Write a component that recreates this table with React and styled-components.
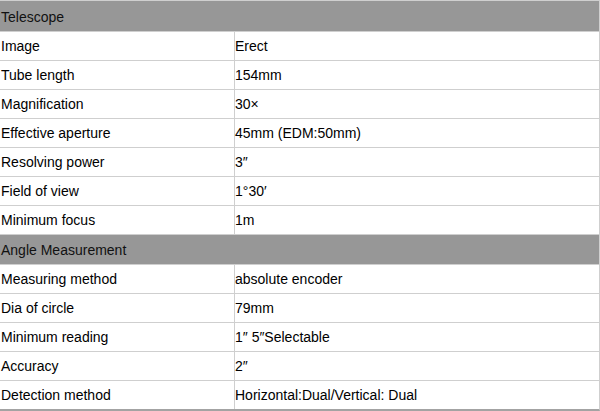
import React from 'react'
import styled, { createGlobalStyle } from 'styled-components'

const sections = [
    {
        title: 'Telescope',
        rows: [
            ['Image', 'Erect'],
            ['Tube length', '154mm'],
            ['Magnification', '30×'],
            ['Effective aperture', '45mm (EDM:50mm)'],
            ['Resolving power', '3″'],
            ['Field of view', '1°30′'],
            ['Minimum focus', '1m'],
        ],
    },
    {
        title: 'Angle Measurement',
        rows: [
            ['Measuring method', 'absolute encoder'],
            ['Dia of circle', '79mm'],
            ['Minimum reading', '1″ 5″Selectable'],
            ['Accuracy', '2″'],
            ['Detection method', 'Horizontal:Dual/Vertical: Dual'],
        ],
    },
]

function App() {
    return (
        <>
            <GlobalStyle />
            <Specs>
                {sections.map((section, i) => (
                    <React.Fragment key={section.title}>
                        <SectionHeader first={i === 0}>{section.title}</SectionHeader>
                        {section.rows.map(([label, value]) => (
                            <Row key={label}>
                                <Label>{label}</Label>
                                <Value>{value}</Value>
                            </Row>
                        ))}
                    </React.Fragment>
                ))}
            </Specs>
        </>
    )
}

export default App

const GlobalStyle = createGlobalStyle`
    body {
        margin: 0;
        background: #fff;
        font-family: "Liberation Sans", Arial, sans-serif;
        font-size: 14px;
        color: #000;
    }
`

const Specs = styled.div`
    width: 600px;
    box-sizing: border-box;
    border-top: 1px solid #cfcfcf;
    border-right: 1px solid #cfcfcf;
    border-bottom: 2px solid #a3a3a3;
`

const SectionHeader = styled.div`
    box-sizing: border-box;
    height: ${p => (p.first ? '31px' : '30px')};
    padding-top: ${p => (p.first ? '2px' : '1px')};
    display: flex;
    align-items: center;
    padding-left: 1px;
    background: #979797;
    color: #111;
    border-bottom: 1px solid #cfcfcf;
`

const Row = styled.div`
    display: grid;
    grid-template-columns: 235px 1fr;
    height: 28px;
    border-bottom: 1px solid #cfcfcf;

    &:last-child {
        border-bottom: none;
    }
`

const Label = styled.div`
    display: flex;
    align-items: center;
    padding-left: 1px;
    border-right: 1px solid #cfcfcf;
`

const Value = styled.div`
    display: flex;
    align-items: center;
    padding-left: 0;
`
